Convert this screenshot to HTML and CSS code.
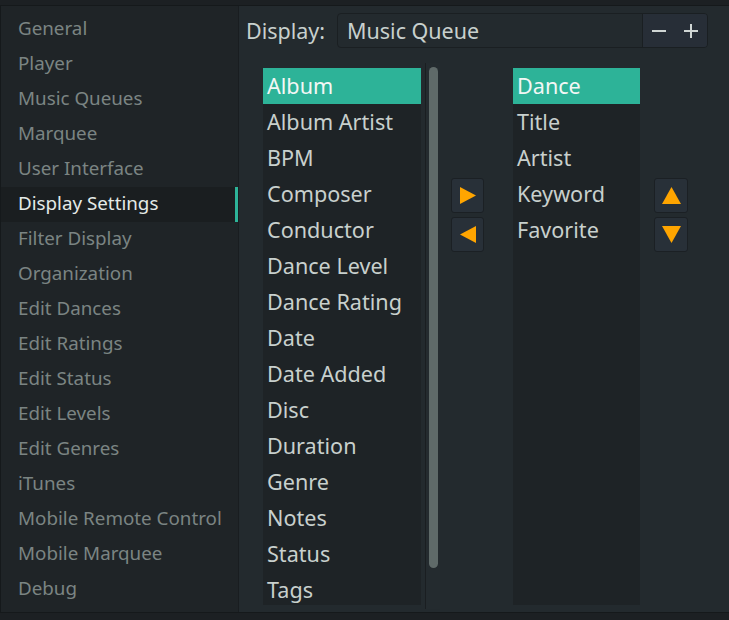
FILE: index.html
```html
<!DOCTYPE html>
<html>
<head>
<meta charset="utf-8">
<link rel="stylesheet" href="styles.css">
</head>
<body>
<div class="app">
  <div class="topstrip"></div>
  <div class="main">
    <nav class="sidebar">
      <div class="nav-item">General</div>
      <div class="nav-item">Player</div>
      <div class="nav-item">Music Queues</div>
      <div class="nav-item">Marquee</div>
      <div class="nav-item">User Interface</div>
      <div class="nav-item active">Display Settings</div>
      <div class="nav-item">Filter Display</div>
      <div class="nav-item">Organization</div>
      <div class="nav-item">Edit Dances</div>
      <div class="nav-item">Edit Ratings</div>
      <div class="nav-item">Edit Status</div>
      <div class="nav-item">Edit Levels</div>
      <div class="nav-item">Edit Genres</div>
      <div class="nav-item">iTunes</div>
      <div class="nav-item">Mobile Remote Control</div>
      <div class="nav-item">Mobile Marquee</div>
      <div class="nav-item">Debug</div>
    </nav>
    <section class="content">
      <div class="display-row">
        <span class="label">Display:</span>
        <div class="combo">
          <span class="combo-text">Music Queue</span>
          <div class="combo-btns">
            <svg class="pm" width="14" height="14" viewBox="0 0 14 14"><rect x="0" y="6" width="14" height="2" fill="#d0d6d4"/></svg>
            <svg class="pm" width="14" height="14" viewBox="0 0 14 14"><rect x="0" y="6" width="14" height="2" fill="#d0d6d4"/><rect x="6" y="0" width="2" height="14" fill="#d0d6d4"/></svg>
          </div>
        </div>
      </div>
      <div class="lists">
        <div class="listframe">
          <div class="list left">
            <div class="li sel">Album</div>
            <div class="li">Album Artist</div>
            <div class="li">BPM</div>
            <div class="li">Composer</div>
            <div class="li">Conductor</div>
            <div class="li">Dance Level</div>
            <div class="li">Dance Rating</div>
            <div class="li">Date</div>
            <div class="li">Date Added</div>
            <div class="li">Disc</div>
            <div class="li">Duration</div>
            <div class="li">Genre</div>
            <div class="li">Notes</div>
            <div class="li">Status</div>
            <div class="li">Tags</div>
          </div>
          <div class="scrolltrack"><div class="thumb"></div></div>
        </div>
        <div class="btncol mid">
          <button class="tb"><svg width="16" height="17" viewBox="0 0 16 17"><polygon points="0,0 16,8.5 0,17" fill="#ffa500"/></svg></button>
          <button class="tb"><svg width="16" height="17" viewBox="0 0 16 17"><polygon points="16,0 0,8.5 16,17" fill="#ffa500"/></svg></button>
        </div>
        <div class="list right">
          <div class="li sel">Dance</div>
          <div class="li">Title</div>
          <div class="li">Artist</div>
          <div class="li">Keyword</div>
          <div class="li">Favorite</div>
        </div>
        <div class="btncol side">
          <button class="tb"><svg width="19" height="17" viewBox="0 0 19 17"><polygon points="0,17 9.5,0 19,17" fill="#ffa500"/></svg></button>
          <button class="tb"><svg width="19" height="17" viewBox="0 0 19 17"><polygon points="0,0 19,0 9.5,17" fill="#ffa500"/></svg></button>
        </div>
      </div>
    </section>
  </div>
  <div class="bottomstrip"></div>
</div>
</body>
</html>
```

FILE: styles.css
```css
html, body {
  margin: 0;
  padding: 0;
  background: #1b1f22;
  font-family: "Noto Sans", "Open Sans", sans-serif;
}
.app {
  width: 729px;
  height: 620px;
  display: flex;
  flex-direction: column;
  overflow: hidden;
}
.topstrip {
  height: 5px;
  background: #1c2023;
  border-bottom: 1px solid #15191b;
}
.main {
  height: 606px;
  display: flex;
  background: #232a2e;
}
.bottomstrip {
  flex: 1;
  background: #1c2023;
  border-top: 1px solid #15191b;
}
.sidebar {
  width: 239px;
  box-sizing: border-box;
  border-left: 1px solid #15191b;
  border-right: 1px solid #191d20;
  background: #1f2427;
  padding-top: 6px;
  display: flex;
  flex-direction: column;
}
.nav-item {
  height: 35px;
  line-height: 33px;
  padding-left: 17px;
  font-size: 18.8px;
  color: #7b8483;
  white-space: nowrap;
}
.nav-item.active {
  background: #1a1e20;
  color: #e4eae7;
  box-shadow: inset -3px 0 0 #2db398;
}
.content {
  flex: 1;
  padding: 7px 0 0 7px;
  display: flex;
  flex-direction: column;
}
.display-row {
  display: flex;
  align-items: center;
  height: 35px;
}
.label {
  font-size: 21.5px;
  color: #c8d0cd;
  width: 91px;
}
.combo {
  width: 371px;
  height: 35px;
  box-sizing: border-box;
  border: 1px solid #1a1f22;
  border-radius: 4px;
  display: flex;
  align-items: center;
  background: #232a2e;
  overflow: hidden;
}
.combo-text {
  flex: 1;
  padding-left: 9px;
  font-size: 21.5px;
  color: #c8d0cd;
}
.combo-btns {
  width: 65px;
  height: 100%;
  border-left: 1px solid #1a1f22;
  background: #272e37;
  display: flex;
  align-items: center;
  padding-left: 9px;
  gap: 18px;
  box-sizing: border-box;
}
.pm { display: block; }
.lists {
  display: flex;
  margin-top: 15px;
  align-items: flex-start;
}
.listframe {
  margin-left: 17px;
  display: flex;
  height: 546px;
  padding-top: 5px;
  box-sizing: border-box;
}
.list {
  background: #1e2326;
  height: 537px;
  overflow: hidden;
}
.list.left { width: 158px; }
.list.right { width: 127px; margin-top: 5px; }
.li {
  height: 36px;
  line-height: 35px;
  padding-left: 4px;
  font-size: 21.6px;
  color: #c8d0cd;
  white-space: nowrap;
}
.li.sel {
  background: #2db398;
  color: #f2f7f5;
}
.scrolltrack {
  margin-left: 4px;
  margin-top: -5px;
  width: 15px;
  height: 546px;
  border-left: 1px solid #1a1e21;
  background: #242b2f;
  box-sizing: border-box;
  padding: 4px 3px 0 3px;
}
.thumb {
  width: 9px;
  height: 501px;
  border-radius: 5px;
  background: #5f6a69;
}
.btncol {
  display: flex;
  flex-direction: column;
  gap: 4px;
  margin-top: 115px;
}
.btncol.mid { margin-left: 11px; margin-right: 29px; }
.btncol.side { margin-left: 14px; }
.tb {
  width: 33px;
  height: 35px;
  padding: 0;
  background: #283038;
  border: 1px solid #1b2024;
  border-radius: 3px;
  display: flex;
  align-items: center;
  justify-content: center;
}
.btncol.side .tb { width: 34px; }
.btncol.mid .tb svg { margin-left: 1px; }
```
